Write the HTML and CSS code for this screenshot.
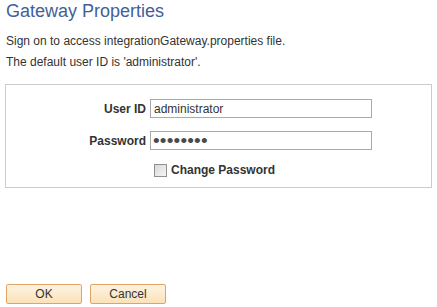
FILE: index.html
```html
<!DOCTYPE html>
<html lang="en">
<head>
    <meta charset="UTF-8">
    <meta name="viewport" content="width=device-width, initial-scale=1.0">
    <title>Gateway Properties</title>
    <link rel="stylesheet" href="styles.css">
</head>
<body>
    <div class="page">
        <h1 class="title">Gateway Properties</h1>
        <p class="intro">Sign on to access integrationGateway.properties file.</p>
        <p class="intro">The default user ID is 'administrator'.</p>

        <form class="signon">
            <div class="signon-grid">
                <label for="userid" class="field-label">User ID</label>
                <input type="text" id="userid" class="field-input" value="administrator">

                <label for="pwd" class="field-label">Password</label>
                <input type="password" id="pwd" class="field-input pwd" value="password">

                <span></span>
                <label class="check">
                    <span class="check-box"></span>
                    Change Password
                </label>
            </div>
        </form>

        <div class="actions">
            <button type="button" class="btn">OK</button>
            <button type="button" class="btn">Cancel</button>
        </div>
    </div>
</body>
</html>
```

FILE: styles.css
```css
body {
    margin: 0;
    font-family: "Liberation Sans", Arial, sans-serif;
    color: #333;
    background: #fff;
}
.page {
    padding: 1px 5px 0 5px;
}
.title {
    margin: 0 0 0 1px;
    font-size: 18px;
    font-weight: normal;
    line-height: 20px;
    color: #41609a;
}
.intro {
    margin: 1px 0 0 1px;
    font-size: 12px;
    line-height: 20px;
}
.intro:first-of-type {
    margin-top: 10px;
}
.signon {
    margin-top: 12px;
    border: 1px solid #cbcbcb;
    padding: 14px 0 10px 0;
}
.signon-grid {
    display: grid;
    grid-template-columns: 140px 222px;
    column-gap: 4px;
    row-gap: 13px;
    align-items: center;
}
.field-label {
    text-align: right;
    font-size: 12px;
    font-weight: bold;
    color: #333;
}
.field-input {
    box-sizing: border-box;
    width: 222px;
    height: 19px;
    margin: 0;
    padding: 0 3px;
    border: 1px solid #a9a9a9;
    font-family: "Liberation Sans", Arial, sans-serif;
    font-size: 12px;
    color: #333;
}
.pwd {
    padding: 0 2px;
    font-size: 19px;
    letter-spacing: 0.2px;
    color: #4a4a4a;
}
.check {
    display: flex;
    align-items: center;
    gap: 4px;
    margin-left: 4px;
    font-size: 12px;
    font-weight: bold;
    color: #333;
}
.check-box {
    box-sizing: border-box;
    width: 13px;
    height: 13px;
    border: 1px solid #8f8f8f;
    background: linear-gradient(135deg, #d8d8d8, #f6f6f6);
}
.actions {
    display: flex;
    gap: 8px;
    margin-top: 96px;
    margin-left: 1px;
}
.btn {
    box-sizing: border-box;
    width: 76px;
    height: 20px;
    padding: 0;
    border: 1px solid #e2a466;
    border-radius: 2px;
    background: linear-gradient(#fdf3e2, #fbe2b8);
    font-family: "Liberation Sans", Arial, sans-serif;
    font-size: 12px;
    color: #333;
}
```
